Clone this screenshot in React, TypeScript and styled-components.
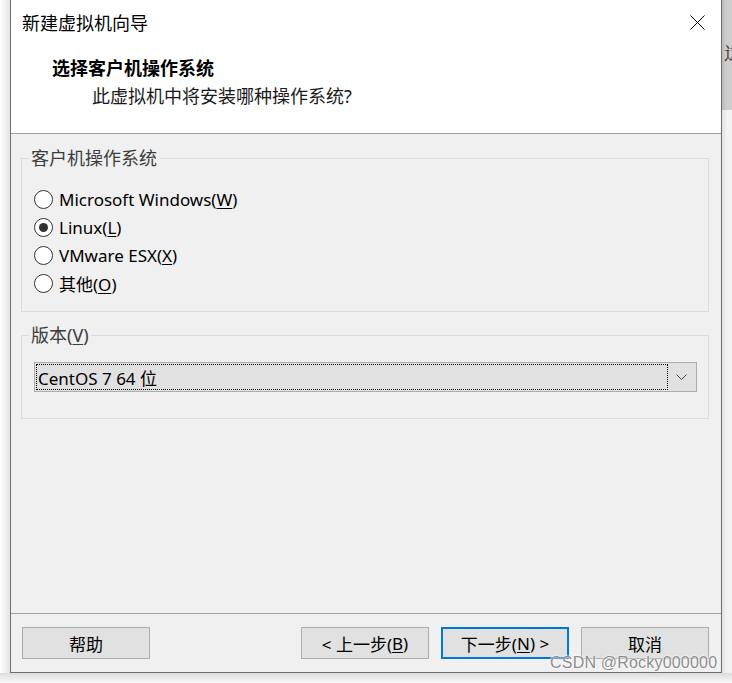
import React from "react";
import styled, { createGlobalStyle } from "styled-components";

const GlobalStyle = createGlobalStyle`
  html, body {
    margin: 0;
    padding: 0;
  }
  body {
    width: 732px;
    height: 683px;
    overflow: hidden;
    background: #ffffff;
    font-family: "Noto Sans", "Noto Sans CJK SC", sans-serif;
    color: #000;
  }
  * {
    box-sizing: border-box;
  }
`;

const Desktop = styled.div`
  position: relative;
  display: grid;
  grid-template-columns: 10px 712px 10px;
  grid-template-rows: 673px 10px;
  width: 732px;
  height: 683px;
`;

const LeftShadow = styled.div`
  background: linear-gradient(to right, #ffffff, #e4e4e4);
`;

const BehindWindow = styled.div`
  display: flex;
  flex-direction: column;
  overflow: hidden;
`;

const BehindTop = styled.div`
  height: 110px;
  background: linear-gradient(to right, #b9b9b9, #cdcdcd 40%);
  font-family: "Noto Serif CJK SC", "Noto Sans CJK SC", serif;
  font-size: 18px;
  line-height: 18px;
  padding: 43px 0 0 2px;
  white-space: nowrap;
  color: #222;
`;

const BehindBottom = styled.div`
  flex: 1;
  background: linear-gradient(to right, #e2e2e2, #f3f3f3 50%);
`;

const BottomShadow = styled.div`
  grid-column: 1 / -1;
  background: linear-gradient(to bottom, #dcdcdc, #fafafa);
`;

const Window = styled.div`
  display: flex;
  flex-direction: column;
  border: 1px solid #6e6e6e;
  border-top: none;
  background: #f0f0f0;
`;

const Header = styled.div`
  height: 134px;
  background: #ffffff;
  border-bottom: 1px solid #a0a0a0;
`;

const TitleBar = styled.div`
  height: 44px;
  display: flex;
  align-items: center;
  justify-content: space-between;
  padding: 0 16px 0 11px;
  font-size: 18px;
`;

const CloseButton = styled.div`
  display: flex;
  width: 15px;
  height: 15px;
`;

const Heading = styled.div`
  margin: 12px 0 0 41px;
  font-size: 18px;
  line-height: 24px;
  font-weight: 700;
`;

const Subtitle = styled.div`
  margin: 4px 0 0 81px;
  font-size: 18px;
  line-height: 24px;
  color: #1a1a1a;
`;

const Content = styled.div`
  flex: 1;
  display: flex;
  flex-direction: column;
  gap: 11px;
  padding: 12px 12px 0 10px;
`;

const Group = styled.fieldset<{ $pad: string }>`
  margin: 0;
  padding: ${(p) => p.$pad};
  border: 1px solid #dcdcdc;
  min-width: 0;
`;

const Legend = styled.legend`
  margin-left: -5px;
  padding: 0 2px;
  font-size: 18px;
  line-height: 24px;
  color: #3c3c3c;
`;

const U = styled.span`
  text-decoration: underline;
  text-underline-offset: 2px;
`;

const RadioRow = styled.div`
  display: flex;
  align-items: center;
  gap: 6px;
  height: 28px;
  font-size: 17px;
`;

const RadioCircle = styled.span<{ $checked?: boolean }>`
  width: 19px;
  height: 19px;
  border-radius: 50%;
  border: 1px solid #333333;
  background: #ffffff;
  display: flex;
  align-items: center;
  justify-content: center;
  &::after {
    content: "";
    width: 9px;
    height: 9px;
    border-radius: 50%;
    background: ${(p) => (p.$checked ? "#333333" : "transparent")};
  }
`;

const Select = styled.div`
  height: 30px;
  display: flex;
  border: 1px solid #adadad;
  background: #e1e1e1;
  padding: 1px;
`;

const SelectValue = styled.div`
  flex: 1;
  display: flex;
  align-items: center;
  padding-left: 1px;
  border: 1px dotted #000;
  font-size: 17px;
`;

const SelectArrow = styled.div`
  width: 27px;
  display: flex;
  align-items: center;
  justify-content: center;
`;

const Footer = styled.div`
  display: flex;
  gap: 12px;
  border-top: 1px solid #a0a0a0;
  padding: 13px 12px 13px 11px;
`;

const Button = styled.div<{ $default?: boolean; $push?: boolean }>`
  width: 128px;
  height: 32px;
  display: flex;
  align-items: center;
  justify-content: center;
  background: #e1e1e1;
  border: ${(p) => (p.$default ? "2px solid #0078d7" : "1px solid #adadad")};
  margin-left: ${(p) => (p.$push ? "auto" : "0")};
  font-size: 17px;
`;

const Watermark = styled.div`
  position: absolute;
  left: 550px;
  top: 653px;
  font-family: "Liberation Sans", sans-serif;
  font-size: 16px;
  line-height: 20px;
  letter-spacing: 0.2px;
  color: #8c8c8c;
  text-shadow: 0 0 2px #ffffff, 0 0 2px #ffffff;
  white-space: nowrap;
`;

const radios = [
  { label: "Microsoft Windows(", key: "W", checked: false },
  { label: "Linux(", key: "L", checked: true },
  { label: "VMware ESX(", key: "X", checked: false },
  { label: "其他(", key: "O", checked: false },
];

export default function App() {
  return (
    <>
      <GlobalStyle />
      <Desktop>
        <LeftShadow />
        <Window>
          <Header>
            <TitleBar>
              <span>新建虚拟机向导</span>
              <CloseButton>
                <svg width="15" height="15" viewBox="0 0 15 15">
                  <path d="M0.5 0.5 L14.5 14.5 M14.5 0.5 L0.5 14.5" stroke="#000" strokeWidth="1" />
                </svg>
              </CloseButton>
            </TitleBar>
            <Heading>选择客户机操作系统</Heading>
            <Subtitle>此虚拟机中将安装哪种操作系统?</Subtitle>
          </Header>
          <Content>
            <Group $pad="15px 12px 14px">
              <Legend>客户机操作系统</Legend>
              {radios.map((r) => (
                <RadioRow key={r.key}>
                  <RadioCircle $checked={r.checked} />
                  <span>
                    {r.label}
                    <U>{r.key}</U>)
                  </span>
                </RadioRow>
              ))}
            </Group>
            <Group $pad="15px 11px 26px 12px">
              <Legend>
                版本(<U>V</U>)
              </Legend>
              <Select>
                <SelectValue>CentOS 7 64 位</SelectValue>
                <SelectArrow>
                  <svg width="11" height="6" viewBox="0 0 11 6">
                    <path d="M0.5 0.5 L5.5 5.5 L10.5 0.5" fill="none" stroke="#444" strokeWidth="1" />
                  </svg>
                </SelectArrow>
              </Select>
            </Group>
          </Content>
          <Footer>
            <Button>帮助</Button>
            <Button $push>
              &lt; 上一步(<U>B</U>)
            </Button>
            <Button $default>
              下一步(<U>N</U>) &gt;
            </Button>
            <Button>取消</Button>
          </Footer>
        </Window>
        <BehindWindow>
          <BehindTop>这</BehindTop>
          <BehindBottom />
        </BehindWindow>
        <BottomShadow />
        <Watermark>CSDN @Rocky000000</Watermark>
      </Desktop>
    </>
  );
}
